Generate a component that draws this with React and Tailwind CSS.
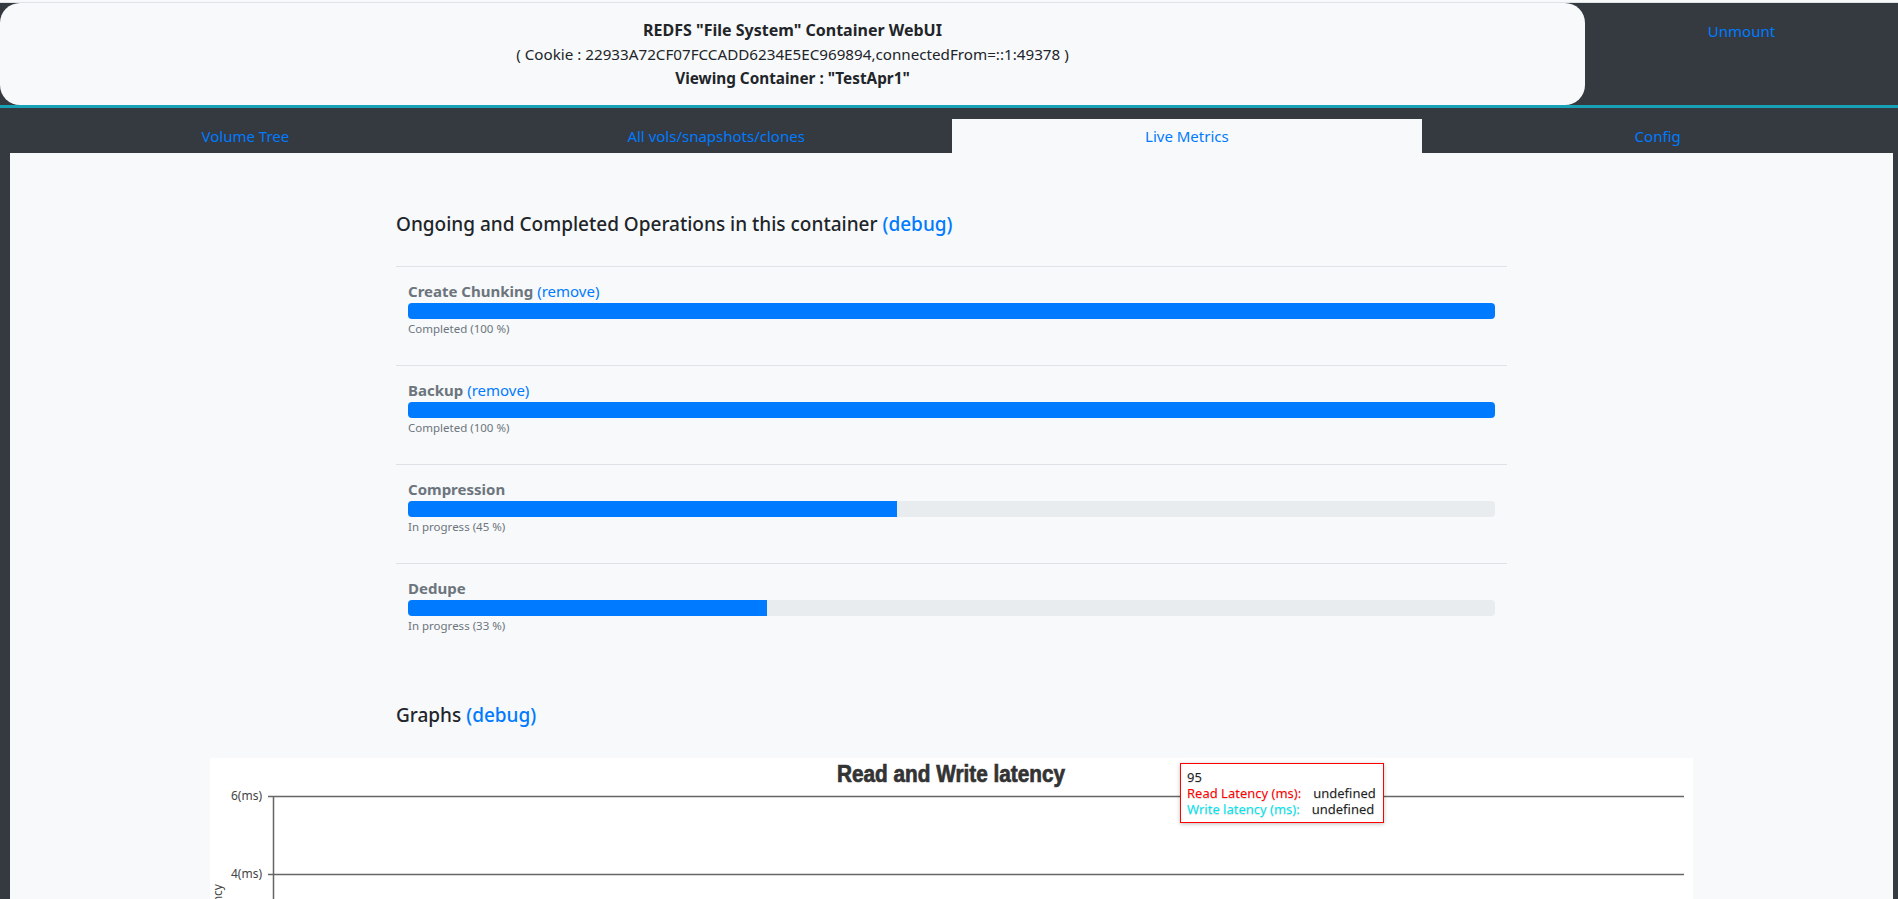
import React from 'react';

const operations = [
  { name: 'Create Chunking', removable: true, status: 'Completed', pct: 100 },
  { name: 'Backup', removable: true, status: 'Completed', pct: 100 },
  { name: 'Compression', removable: false, status: 'In progress', pct: 45 },
  { name: 'Dedupe', removable: false, status: 'In progress', pct: 33 },
];

const tabs = ['Volume Tree', 'All vols/snapshots/clones', 'Live Metrics', 'Config'];

const OperationItem = ({ op }) => (
  <div className="border-t border-[#dee2e6] px-3 pt-3 pb-[27px]">
    <div className="h-6 leading-6 text-[15px]">
      <span className="font-bold text-[#6c757d]">{op.name}</span>
      {op.removable && <span className="text-[#007bff]"> (remove)</span>}
    </div>
    <div className="h-4 rounded-[4px] bg-[#e9ecef] overflow-hidden">
      <div className="h-full bg-[#007bff]" style={{ width: `${op.pct}%` }} />
    </div>
    <div className="text-[11.5px] leading-[19px] text-[#6c757d]">
      {op.status} ({op.pct} %)
    </div>
  </div>
);

const LatencyChart = () => (
  <div className="relative w-[1483px] h-[300px] mx-auto bg-white">
    <svg width="1483" height="300" className="block">
      <text
        x="741"
        y="24"
        textAnchor="middle"
        fontSize="23"
        fontWeight="700"
        fill="#333"
        stroke="#333"
        strokeWidth="0.7"
        textLength="228"
        lengthAdjust="spacingAndGlyphs"
        style={{ fontFamily: '"Liberation Sans", "Noto Sans", sans-serif' }}
      >
        Read and Write latency
      </text>
      <line x1="58" y1="38.5" x2="1474" y2="38.5" stroke="#666" strokeWidth="1.5" />
      <line x1="58" y1="116.5" x2="1474" y2="116.5" stroke="#666" strokeWidth="1.5" />
      <line x1="63.5" y1="38" x2="63.5" y2="300" stroke="#666" strokeWidth="1.5" />
      <g fontSize="12" fill="#444" textAnchor="end" style={{ fontFamily: '"Noto Sans", sans-serif' }}>
        <text x="52" y="42">6(ms)</text>
        <text x="52" y="120">4(ms)</text>
      </g>
      <text
        transform="rotate(-90)"
        x="-126"
        y="12"
        textAnchor="end"
        fontSize="12"
        fill="#444"
        style={{ fontFamily: '"Noto Sans", sans-serif' }}
      >
        Latency
      </text>
    </svg>

    {/* hover tooltip */}
    <div className="absolute left-[970px] top-[5px] w-[204px] h-[60px] border border-[#ff0000] bg-white shadow-[0_1px_4px_rgba(0,0,0,0.25)] px-[6px] pt-[5px] text-[13px] leading-4 whitespace-nowrap text-[#222] [text-shadow:0_1px_1px_rgba(0,0,0,0.15)]">
      <div>95</div>
      <div className="flex gap-[12px]">
        <span className="shrink-0 text-[#ff0000]">Read Latency (ms):</span>
        <span className="shrink-0">undefined</span>
      </div>
      <div className="flex gap-[12px]">
        <span className="shrink-0 text-[#00e5ee]">Write latency (ms):</span>
        <span className="shrink-0">undefined</span>
      </div>
    </div>
  </div>
);

const App = () => {
  return (
    <div className="h-[899px] overflow-hidden bg-[#343a40] font-['Noto_Sans',sans-serif] text-[#212529]">
      <div className="h-[3px] bg-[#f8f9fa] border-b border-[#dee2e6]" />

      <div className="flex h-[102px]">
        <div className="w-[1585px] rounded-[20px] bg-[#f8f9fa] flex flex-col items-center pt-[15px] leading-6">
          <div className="font-bold text-[16px]">REDFS "File System" Container WebUI</div>
          <div className="text-[15.2px]">( Cookie : 22933A72CF07FCCADD6234E5EC969894,connectedFrom=::1:49378 )</div>
          <div className="font-bold text-[15.3px]">Viewing Container : "TestApr1"</div>
        </div>
        <div className="flex-1 flex justify-center pt-[16px]">
          <a className="text-[15px] leading-6 text-[#007bff]">Unmount</a>
        </div>
      </div>

      <div className="h-[3px] bg-[#17a2b8]" />

      <div className="pl-[10px] pr-[5px]">
        <div className="grid grid-cols-4 h-[45px] items-end">
          {tabs.map((t) => (
            <div
              key={t}
              className={`h-[34px] flex items-center justify-center text-[15px] text-[#007bff] ${
                t === 'Live Metrics' ? 'bg-[#f8f9fa]' : ''
              }`}
            >
              {t}
            </div>
          ))}
        </div>

        <div className="bg-[#f8f9fa] pt-[59px] h-[800px]">
          <div className="w-[1111px] mx-auto">
            <h5 className="text-[19px] leading-6 font-medium mb-[30px]">
              Ongoing and Completed Operations in this container{' '}
              <span className="text-[#007bff]">(debug)</span>
            </h5>
            {operations.map((op) => (
              <OperationItem key={op.name} op={op} />
            ))}
            <h5 className="text-[19px] leading-6 font-medium mt-[41px] mb-[31px]">
              Graphs <span className="text-[#007bff]">(debug)</span>
            </h5>
          </div>
          <LatencyChart />
        </div>
      </div>
    </div>
  );
};

export default App;
